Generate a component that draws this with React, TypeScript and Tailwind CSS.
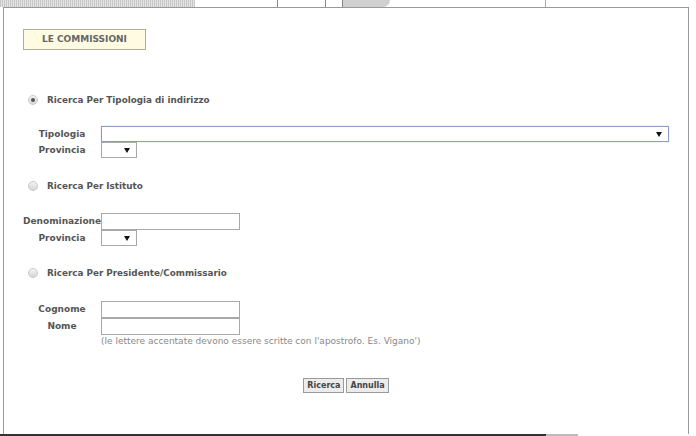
import React from 'react';

const font = { fontFamily: '"DejaVu Sans", Verdana, sans-serif' };

function Radio({ checked }: { checked?: boolean }) {
    return (
        <div className="w-[10px] h-[10px] rounded-full border border-[#c8c8c8] bg-gradient-to-b from-[#f4f4f4] to-[#d6d6d6] flex items-center justify-center">
            {checked && <div className="w-[4px] h-[4px] rounded-full bg-[#555]" />}
        </div>
    );
}

function Arrow() {
    return (
        <svg width="6" height="5" viewBox="0 0 6 5">
            <path d="M0 0 L6 0 L3 5 Z" fill="#111" />
        </svg>
    );
}

function Select({ wide, focus }: { wide?: boolean; focus?: boolean }) {
    return (
        <div
            className={`h-[16px] bg-white border flex items-center justify-end pr-[6px] ${wide ? 'w-[568px]' : 'w-[36px]'} ${focus ? 'border-[#8e9cc4] shadow-[0_0_1px_#b9c6e8]' : 'border-[#a9a9a9]'}`}
        >
            <Arrow />
        </div>
    );
}

function TextBox() {
    return <div className="w-[139px] h-[17px] bg-white border border-[#a9a9a9]" />;
}

function Row({ label, children }: { label: string; children: React.ReactNode }) {
    return (
        <div className="flex items-center">
            <div className="w-[78px] text-center text-[9px] font-bold text-[#555] leading-none">{label}</div>
            {children}
        </div>
    );
}

function RadioRow({ label, checked, className }: { label: string; checked?: boolean; className: string }) {
    return (
        <div className={`flex items-center h-[12px] pl-[24px] gap-[9px] ${className}`}>
            <Radio checked={checked} />
            <span className="text-[8.8px] font-bold text-[#555] leading-none">{label}</span>
        </div>
    );
}

export default function App() {
    return (
        <div className="w-[696px] h-[436px] bg-white overflow-hidden flex flex-col" style={font}>
            {/* header strip, cut off */}
            <div className="h-[7px] w-[546px] flex shrink-0">
                <div className="w-[195px] h-full bg-[repeating-linear-gradient(90deg,#c8c8c8_0px,#c8c8c8_1px,#e2e2e2_1px,#e2e2e2_2px)]" />
                <div className="w-[83px] h-full border-r border-[#888]" />
                <div className="w-[48px] h-full border-r border-[#888]" />
                <div className="w-[17px] h-full border-r border-[#888]" />
                <div className="w-[47px] h-full bg-[#d0d0d0] rounded-br-[20px]" />
                <div className="flex-1 h-full border-r border-[#aaa]" />
            </div>

            <div className="ml-[3px] w-[686px] flex-1 border-t border-l border-r border-[#999] flex flex-col">
                <div className="mt-[21px] ml-[19px] w-[123px] h-[21px] border border-[#b6ae93] bg-[#fffbe3] flex items-center justify-center">
                    <span className="text-[9px] font-bold text-[#666] leading-none">LE COMMISSIONI</span>
                </div>

                <RadioRow label="Ricerca Per Tipologia di indirizzo" checked className="mt-[44px]" />
                <div className="mt-[20px] ml-[19px] flex flex-col">
                    <Row label="Tipologia">
                        <Select wide focus />
                    </Row>
                    <Row label="Provincia">
                        <Select />
                    </Row>
                </div>

                <RadioRow label="Ricerca Per Istituto" className="mt-[22px]" />
                <div className="mt-[21px] ml-[19px] flex flex-col">
                    <Row label="Denominazione">
                        <TextBox />
                    </Row>
                    <Row label="Provincia">
                        <Select />
                    </Row>
                </div>

                <RadioRow label="Ricerca Per Presidente/Commissario" className="mt-[21px]" />
                <div className="mt-[22px] ml-[19px] flex flex-col">
                    <Row label="Cognome">
                        <TextBox />
                    </Row>
                    <Row label="Nome">
                        <TextBox />
                    </Row>
                    <div className="ml-[78px] h-[13px] flex items-center text-[9px] text-[#888] leading-none">
                        (le lettere accentate devono essere scritte con l'apostrofo. Es. Vigano')
                    </div>
                </div>

                <div className="mt-[30px] flex justify-center gap-[2px]">
                    <button className="h-[15px] px-[3px] border border-[#9a9a9a] bg-[#ececec] text-[8px] font-bold text-[#444] leading-none">
                        Ricerca
                    </button>
                    <button className="h-[15px] px-[3px] border border-[#9a9a9a] bg-[#ececec] text-[8px] font-bold text-[#444] leading-none">
                        Annulla
                    </button>
                </div>
            </div>

            <div className="h-[2px] flex shrink-0">
                <div className="w-[546px] bg-[#333]" />
                <div className="w-[32px] bg-[#bbb]" />
            </div>
        </div>
    );
}
